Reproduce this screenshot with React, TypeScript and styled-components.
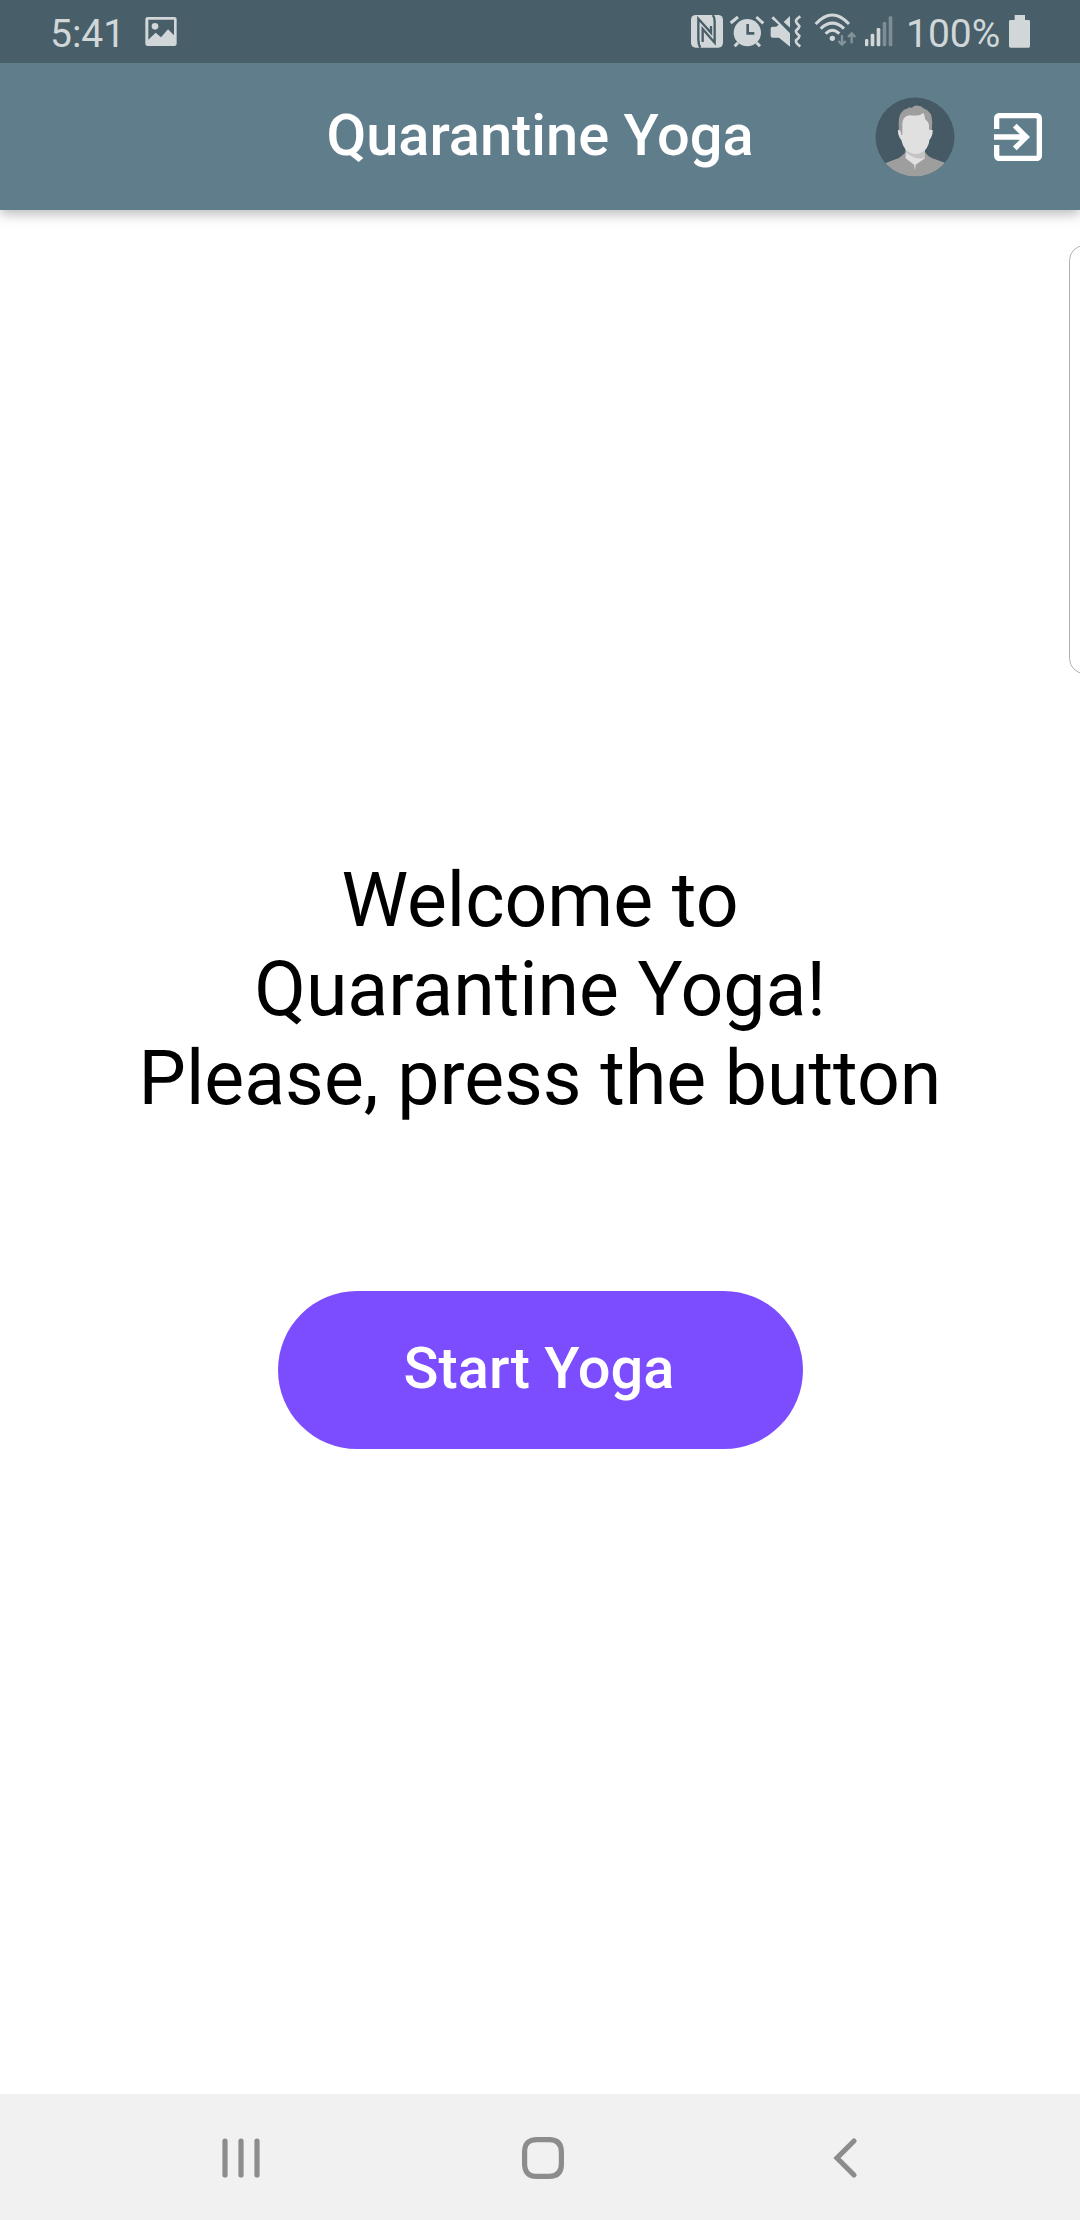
import styled, { createGlobalStyle } from "styled-components";

const GlobalStyle = createGlobalStyle`
  body {
    margin: 0;
    background: #fff;
    font-family: Roboto, "Liberation Sans", sans-serif;
  }
`;

const Screen = styled.div`
  position: relative;
  display: flex;
  flex-direction: column;
  width: 1080px;
  height: 2220px;
  overflow: hidden;
  background: #fff;
`;

const StatusBar = styled.div`
  position: relative;
  z-index: 1;
  display: flex;
  align-items: flex-start;
  justify-content: space-between;
  height: 63px;
  padding: 0 49px 0 50px;
  box-sizing: border-box;
  background: #485e68;
  color: #d1d7d9;
  flex-shrink: 0;
`;

const StatusGroup = styled.div`
  display: flex;
  align-items: flex-start;
`;

const StatusText = styled.span<{ $width: number }>`
  width: ${(p) => p.$width}px;
  padding-top: 11px;
  font-size: 39px;
  line-height: 46px;
  white-space: nowrap;
`;

const StatusIcon = styled.svg<{ $width: number; $gap?: number }>`
  display: block;
  width: ${(p) => p.$width}px;
  height: 36px;
  margin-top: 12px;
  margin-right: ${(p) => p.$gap ?? 0}px;
  fill: currentColor;
`;

const AppBar = styled.header`
  display: grid;
  grid-template-columns: 205px 1fr 205px;
  align-items: center;
  height: 147px;
  background: #607d8b;
  box-shadow: 0 4px 12px rgba(0, 0, 0, 0.28);
  flex-shrink: 0;
`;

const Title = styled.h1`
  grid-column: 2;
  margin: 0 0 3px;
  text-align: center;
  font-size: 57.75px;
  font-weight: 500;
  line-height: 68px;
  color: #fff;
  white-space: nowrap;
`;

const Actions = styled.div`
  display: flex;
  align-items: center;
  gap: 31px;
`;

const Avatar = styled.svg`
  display: block;
  width: 80px;
  height: 80px;
`;

const ExitIcon = styled.svg`
  display: block;
  width: 64px;
  height: 64px;
  fill: #fff;
`;

const Content = styled.main`
  display: flex;
  flex-direction: column;
  align-items: center;
  flex: 1;
  padding-top: 646px;
`;

const Welcome = styled.p`
  margin: 0 0 168px;
  font-size: 75.2px;
  line-height: 89px;
  text-align: center;
  color: #000;
  white-space: nowrap;
`;

const StartButton = styled.button`
  width: 525px;
  height: 158px;
  padding: 0 2px 4px 0;
  border: 0;
  border-radius: 79px;
  background: #7c4dff;
  color: #fff;
  font-family: inherit;
  font-size: 57.75px;
  font-weight: 500;
  white-space: nowrap;
`;

const EdgeHandle = styled.div`
  position: absolute;
  top: 245px;
  right: -20px;
  width: 29px;
  height: 427px;
  border: 1px solid #b0b0b0;
  border-radius: 16px;
  background: #fff;
`;

const NavBar = styled.nav`
  display: grid;
  grid-template-columns: repeat(3, 1fr);
  align-items: center;
  justify-items: center;
  height: 126px;
  padding: 2px 83px 0 90px;
  box-sizing: border-box;
  background: #f1f1f1;
  flex-shrink: 0;
`;

const NavIcon = styled.svg`
  display: block;
  width: 44px;
  height: 44px;
  fill: none;
  stroke: #8c8c8c;
  stroke-width: 5.2;
  stroke-linecap: round;
`;

function UserAvatar() {
  return (
    <Avatar viewBox="0 0 240 240">
      <clipPath id="avatar">
        <circle cx="120" cy="120" r="118.5" />
      </clipPath>
      <g clipPath="url(#avatar)">
        <rect width="240" height="240" fill="#455a64" />
        <path d="M30 199L70 184Q80 178 92 166H150Q160 180 172 184L214 199V240H30Z" fill="#9e9e9e" />
        <path d="M92 150H150V184L122 203L120 220L117 203L92 184Z" fill="#e0e0e0" />
        <path d="M92 160L150 154V182Q132 188 118 181Q102 176 92 166Z" fill="#c4c4c4" />
        <path d="M74 116Q66 60 80 46Q86 36 96 35Q104 27 110 33Q120 23 132 27Q140 27 145 34Q158 38 167 50Q176 68 168 116Z" fill="#9e9e9e" />
        <path d="M82 114V78Q84 58 103 55Q136 58 145 47Q150 56 150 66Q159 72 162 84V98L173 99Q174 116 163 129Q162 146 150 160Q134 172 120 171Q106 170 92 158Q82 146 79 129Q68 116 69 98Q78 98 79 114Z" fill="#e0e0e0" />
      </g>
    </Avatar>
  );
}

export default function App() {
  return (
    <>
      <GlobalStyle />
      <Screen>
        <StatusBar>
          <StatusGroup>
            <StatusText $width={95}>5:41</StatusText>
            <StatusIcon $width={32} viewBox="0 0 96 108">
              <path
                fillRule="evenodd"
                d="M8 15H88Q95 15 95 22V94Q95 102 88 102H8Q1 102 1 94V22Q1 15 8 15ZM10 23V83L32 62L48 76L69 52L87 70V23Z"
              />
              <circle cx="30" cy="43" r="10" />
            </StatusIcon>
          </StatusGroup>
          <StatusGroup>
            <StatusIcon $width={34} $gap={5} viewBox="0 0 102 108">
              <rect x="3" y="9" width="96" height="98" rx="14" />
              <path
                d="M31 107Q25 98 25 82V20L63 62V42M38 90V51L74 92V28Q74 15 68 9"
                fill="none"
                stroke="#485e68"
                strokeWidth="7"
              />
            </StatusIcon>
            <StatusIcon $width={36} $gap={4} viewBox="0 0 108 108">
              <circle cx="55" cy="62" r="41" />
              <path
                d="M5 33L27 15M82 15L103 34M17 103L27 92M83 92L93 103"
                fill="none"
                stroke="currentColor"
                strokeWidth="9"
              />
              <path d="M56 36V64H76" fill="none" stroke="#485e68" strokeWidth="8" />
            </StatusIcon>
            <StatusIcon $width={34} $gap={9} viewBox="0 0 102 108">
              <path d="M5 50Q5 44 11 44H22L29 38L7 19L13 13L63 64V104L30 77H11Q5 77 5 71Z" />
              <path d="M44 30L63 12V47Z" />
              <path
                d="M94 13Q80 22 81 28Q82 34 91 42Q92 46 81 56Q80 62 91 71Q92 76 81 85Q79 93 94 103"
                fill="none"
                stroke="currentColor"
                strokeWidth="8"
              />
            </StatusIcon>
            <StatusIcon $width={46} $gap={5} viewBox="0 0 138 108">
              <path
                d="M11 36Q61 -18 111 36M26 50Q61 17 96 50M41 65Q61 44 82 65"
                fill="none"
                stroke="currentColor"
                strokeWidth="9"
              />
              <circle cx="61" cy="79" r="8" />
              <path
                d="M90 69V98M79 87L90 98L101 87M119 94V64M108 75L119 64L130 75"
                fill="none"
                stroke="#82939a"
                strokeWidth="7"
              />
            </StatusIcon>
            <StatusIcon $width={30} $gap={13} viewBox="0 0 90 108">
              <rect x="6" y="81" width="10" height="22" rx="4" />
              <rect x="23" y="65" width="11" height="38" rx="4" />
              <rect x="41" y="48" width="11" height="55" rx="4" />
              <rect x="59" y="30" width="11" height="73" rx="4" opacity="0.4" />
              <rect x="77" y="13" width="11" height="90" rx="4" opacity="0.4" />
            </StatusIcon>
            <StatusText $width={101}>100%</StatusText>
            <StatusIcon $width={24} viewBox="0 0 72 108">
              <path d="M23 9H54V24H65Q69 24 69 28V102Q69 107 65 107H11Q6 107 6 102V28Q6 24 11 24H23Z" />
            </StatusIcon>
          </StatusGroup>
        </StatusBar>

        <AppBar>
          <Title>Quarantine Yoga</Title>
          <Actions>
            <UserAvatar />
            <ExitIcon viewBox="0 0 24 24">
              <path d="M10.09 15.59L11.5 17l5-5-5-5-1.41 1.41L12.67 11H3v2h9.67l-2.58 2.59zM19 3H5c-1.11 0-2 .9-2 2v4h2V5h14v14H5v-4H3v4c0 1.1.89 2 2 2h14c1.1 0 2-.9 2-2V5c0-1.1-.9-2-2-2z" />
            </ExitIcon>
          </Actions>
        </AppBar>

        <Content>
          <Welcome>
            Welcome to
            <br />
            Quarantine Yoga!
            <br />
            Please, press the button
          </Welcome>
          <StartButton>Start Yoga</StartButton>
        </Content>

        <NavBar>
          <NavIcon viewBox="0 0 44 44">
            <path d="M6 5V39M22 5V39M38 5V39" />
          </NavIcon>
          <NavIcon viewBox="0 0 44 44">
            <path d="M16 3.6H28Q40.4 3.6 40.4 16V28Q40.4 40.4 28 40.4H16Q3.6 40.4 3.6 28V16Q3.6 3.6 16 3.6Z" />
          </NavIcon>
          <NavIcon viewBox="0 0 44 44">
            <path d="M30 5L13 22L30 39" />
          </NavIcon>
        </NavBar>
        <EdgeHandle />
      </Screen>
    </>
  );
}
